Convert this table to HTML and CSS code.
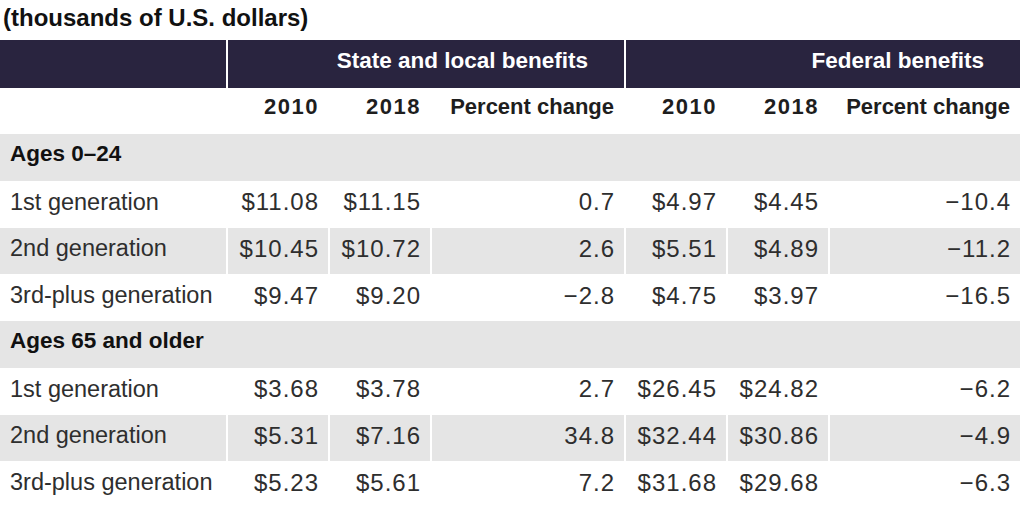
FILE: index.html
```html
<!DOCTYPE html>
<html lang="en">
<head>
<meta charset="utf-8">
<title>Benefits by generation</title>
<link rel="stylesheet" href="styles.css">
</head>
<body>
<div class="page">
  <h1 class="title">(thousands of U.S. dollars)</h1>
  <div class="table">
    <div class="row band">
      <div class="cell blank"></div>
      <div class="cell group span3">State and local benefits</div>
      <div class="cell group span3">Federal benefits</div>
    </div>
    <div class="row colhead">
      <div class="cell"></div>
      <div class="cell num yr">2010</div>
      <div class="cell num yr">2018</div>
      <div class="cell num">Percent change</div>
      <div class="cell num yr">2010</div>
      <div class="cell num yr">2018</div>
      <div class="cell num">Percent change</div>
    </div>
    <div class="row section"><div class="cell span7">Ages 0–24</div></div>
    <div class="row data">
      <div class="cell label">1st generation</div>
      <div class="cell num">$11.08</div><div class="cell num">$11.15</div><div class="cell num">0.7</div>
      <div class="cell num">$4.97</div><div class="cell num">$4.45</div><div class="cell num">−10.4</div>
    </div>
    <div class="row data shaded">
      <div class="cell label">2nd generation</div>
      <div class="cell num">$10.45</div><div class="cell num">$10.72</div><div class="cell num">2.6</div>
      <div class="cell num">$5.51</div><div class="cell num">$4.89</div><div class="cell num">−11.2</div>
    </div>
    <div class="row data">
      <div class="cell label">3rd-plus generation</div>
      <div class="cell num">$9.47</div><div class="cell num">$9.20</div><div class="cell num">−2.8</div>
      <div class="cell num">$4.75</div><div class="cell num">$3.97</div><div class="cell num">−16.5</div>
    </div>
    <div class="row section"><div class="cell span7">Ages 65 and older</div></div>
    <div class="row data">
      <div class="cell label">1st generation</div>
      <div class="cell num">$3.68</div><div class="cell num">$3.78</div><div class="cell num">2.7</div>
      <div class="cell num">$26.45</div><div class="cell num">$24.82</div><div class="cell num">−6.2</div>
    </div>
    <div class="row data shaded">
      <div class="cell label">2nd generation</div>
      <div class="cell num">$5.31</div><div class="cell num">$7.16</div><div class="cell num">34.8</div>
      <div class="cell num">$32.44</div><div class="cell num">$30.86</div><div class="cell num">−4.9</div>
    </div>
    <div class="row data">
      <div class="cell label">3rd-plus generation</div>
      <div class="cell num">$5.23</div><div class="cell num">$5.61</div><div class="cell num">7.2</div>
      <div class="cell num">$31.68</div><div class="cell num">$29.68</div><div class="cell num">−6.3</div>
    </div>
  </div>
</div>
</body>
</html>
```
FILE: styles.css
```css
* { box-sizing: border-box; }
html, body { margin: 0; padding: 0; background: #ffffff; }
body {
  font-family: "Liberation Sans", Arial, sans-serif;
  color: #2b2b2b;
  width: 1024px;
  height: 512px;
  overflow: hidden;
}
.page { width: 1020px; }
.title {
  margin: 0;
  height: 40px;
  padding: 4px 0 0 3px;
  font-size: 24px;
  line-height: 28px;
  font-weight: 700;
  color: #111111;
}
.table { display: flex; flex-direction: column; }
.row {
  display: grid;
  grid-template-columns: 226px 100px 100px 192px 100px 100px 190px;
  column-gap: 2px;
}
.cell {
  display: flex;
  align-items: center;
  padding: 0 10px;
  white-space: nowrap;
}
.num { justify-content: flex-end; }
.span3 { grid-column: span 3; }
.span7 { grid-column: span 7; }

.band { height: 48px; }
.band .cell { background: #29243f; }
.band .group {
  justify-content: flex-end;
  padding-right: 36px;
  color: #ffffff;
  font-size: 22.5px;
  font-weight: 700;
  padding-bottom: 6px;
}

.colhead { height: 46px; }
.colhead .cell {
  font-size: 22px;
  font-weight: 700;
  color: #1e1e1e;
  padding-bottom: 8px;
}
.colhead .yr { letter-spacing: 1.5px; padding-right: 9px; }

.section { height: 46.75px; }
.section .cell {
  background: #e5e5e5;
  font-size: 22.5px;
  font-weight: 700;
  color: #111111;
  padding-bottom: 6px;
}

.data { height: 46.75px; }
.data .cell {
  font-size: 23.5px;
  color: #2e2e2e;
  padding-bottom: 4px;
}
.data .num { font-size: 24px; letter-spacing: 1px; padding-right: 9px; }
.shaded .cell { background: #e5e5e5; }
```
